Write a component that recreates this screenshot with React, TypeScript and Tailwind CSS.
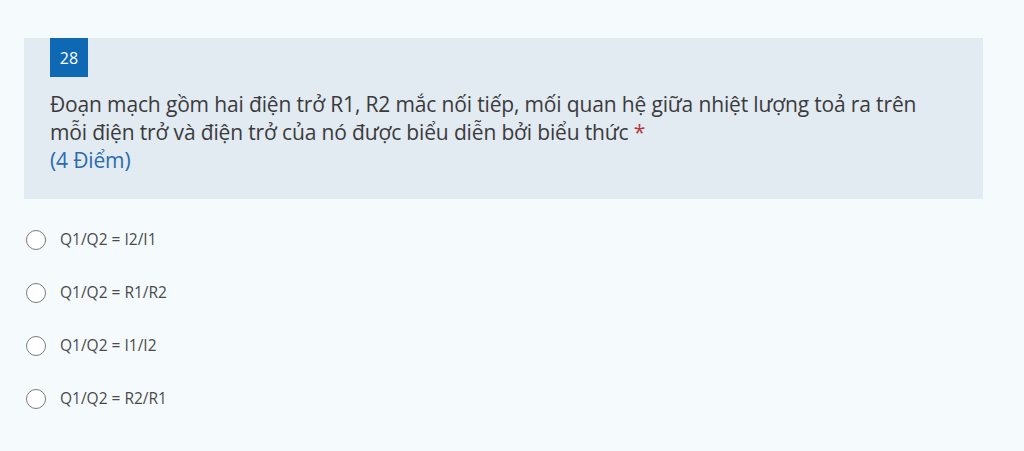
import { useState } from 'react';

const options = ['Q1/Q2 = I2/I1', 'Q1/Q2 = R1/R2', 'Q1/Q2 = I1/I2', 'Q1/Q2 = R2/R1'];

export default function App() {
  const [selected, setSelected] = useState<number | null>(null);

  return (
    <div
      className="min-h-[451px] w-[1024px] bg-[#f5fbfd] pt-[38px]"
      style={{ fontFamily: '"Open Sans", "Noto Sans", sans-serif' }}
    >
      {/* Question header */}
      <div className="ml-[24px] h-[161px] w-[959px] bg-[#e2eaf2] px-[26px]">
        <div className="flex h-[39px] w-[38px] items-center justify-center bg-[#0f68b4] text-[16px] text-white">
          28
        </div>
        <div className="mt-[13px] text-[21px] leading-[28px] tracking-[-0.15px] text-[#3b3b3b]">
          <p className="whitespace-nowrap">
            Đoạn mạch gồm hai điện trở R1, R2 mắc nối tiếp, mối quan hệ giữa nhiệt lượng toả ra trên
            <br />
            mỗi điện trở và điện trở của nó được biểu diễn bởi biểu thức{' '}
            <span className="text-[#b23a3f]">*</span>
          </p>
          <p className="text-[#2a6cae]">(4 Điểm)</p>
        </div>
      </div>

      {/* Options */}
      <div className="ml-[26px] mt-[31px] flex flex-col gap-[33px]">
        {options.map((opt, i) => (
          <label key={opt} className="flex h-[20px] cursor-pointer items-center gap-[14px]" onClick={() => setSelected(i)}>
            <span className="flex h-[20px] w-[20px] items-center justify-center rounded-full border-[1.5px] border-[#7a7a7a] bg-white">
              {selected === i && <span className="h-[10px] w-[10px] rounded-full bg-[#0f68b4]" />}
            </span>
            <span className="text-[15.5px] text-[#4a4a4a]">{opt}</span>
          </label>
        ))}
      </div>
    </div>
  );
}
